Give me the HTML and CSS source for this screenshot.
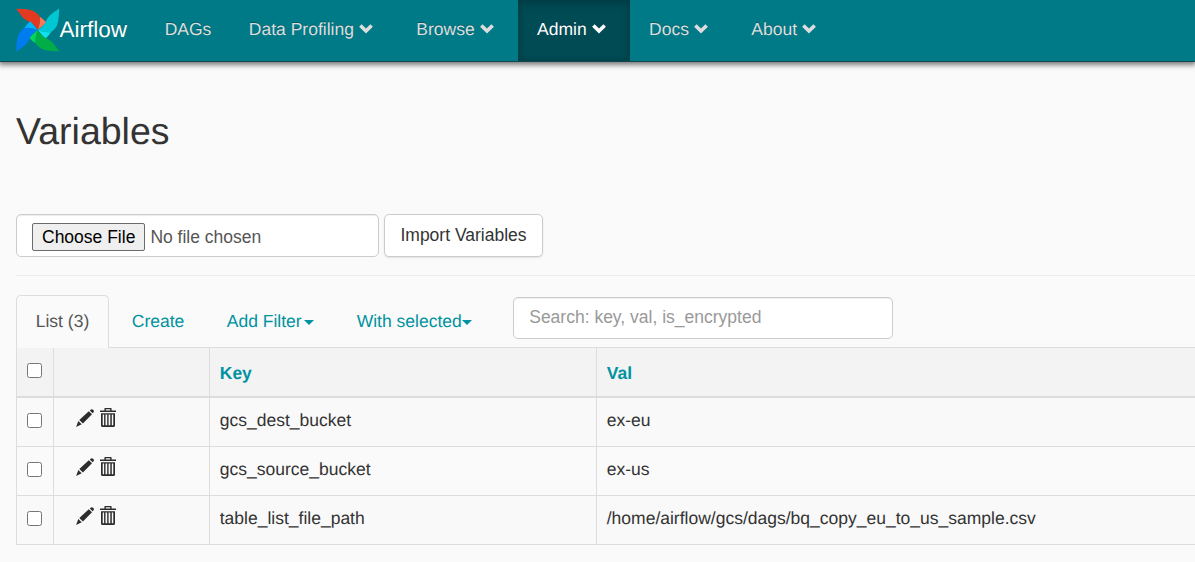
FILE: index.html
```html
<!DOCTYPE html>
<html lang="en">
<head>
<meta charset="utf-8">
<title>Airflow - Variables</title>
<link rel="stylesheet" href="styles.css">
</head>
<body>
<svg width="0" height="0" class="defs">
  <symbol id="chevron" viewBox="0 0 14 10"><path d="M2.6 .2 7 4.4 11.4 .2 13.9 2.7 7 9.6 .1 2.7Z"/></symbol>
  <symbol id="pencil" viewBox="0 0 18 18"><path d="M13.8 1.6 15 .5Q15.9-.2 16.7.5L17.7 1.5Q18.3 2.4 17.6 3.3L16.6 4.3ZM12.8 2.2 16 5.3 6.9 14.4 3.3 10.9ZM2.3 12 5.7 15.2 .1 17.9Z"/></symbol>
  <symbol id="trash" viewBox="0 0 16 19"><path fill-rule="evenodd" d="M5 0H11Q11.6 0 11.6 .8V2.6H16V4.1H0V2.6H4.4V.8Q4.4 0 5 0ZM5.8 1.3V2.6H10.2V1.3ZM1 5.3H15V17.4Q15 18.9 13.5 18.9H2.5Q1 18.9 1 17.4ZM2.7 6.4V17.3H4.1V6.4ZM5.5 6.4V17.3H7.2V6.4ZM8.6 6.4V17.3H10.3V6.4ZM11.8 6.4V17.3H13.3V6.4Z"/></symbol>
  <symbol id="blade" viewBox="0 0 44 44"><path d="M0 .4C8 .5 15 .9 19 3.5C22 5.5 23.8 7.5 24.2 9C24.7 14 23.7 18 22 22C19 16.5 15 14.5 12 13C6 10 5 6 0 .4Z"/></symbol>
  <symbol id="fold" viewBox="0 0 44 44"><path d="M24.1 8.5Q28 11 30.8 14.5L22 22Q25 15 24.1 8.5Z"/></symbol>
</svg>
<nav class="navbar">
  <a class="brand">
    <svg class="logo" viewBox="0 0 44 44">
      <g><use href="#blade" fill="#e43921"/><use href="#fold" fill="#ff7557"/></g>
      <g transform="rotate(90 22 22)"><use href="#blade" fill="#00c7d4"/><use href="#fold" fill="#11e1ee"/></g>
      <g transform="rotate(180 22 22)"><use href="#blade" fill="#00ad46"/><use href="#fold" fill="#04d659"/></g>
      <g transform="rotate(270 22 22)"><use href="#blade" fill="#017cee"/><use href="#fold" fill="#00b5ff"/></g>
    </svg><span>Airflow</span></a>
  <a class="item">DAGs</a>
  <a class="item menu">Data Profiling <svg class="chev"><use href="#chevron"/></svg></a>
  <a class="item menu">Browse <svg class="chev"><use href="#chevron"/></svg></a>
  <a class="item menu active">Admin <svg class="chev"><use href="#chevron"/></svg></a>
  <a class="item menu">Docs <svg class="chev"><use href="#chevron"/></svg></a>
  <a class="item menu">About <svg class="chev"><use href="#chevron"/></svg></a>
</nav>
<main class="content">
  <h2 class="title">Variables</h2>
  <form class="import">
    <input class="control file" type="file">
    <button class="btn" type="button">Import Variables</button>
  </form>
  <hr class="rule">
  <div class="tabs">
    <a class="tab current">List (3)</a>
    <a class="tab create">Create</a>
    <a class="tab filter">Add Filter<i class="caret spaced"></i></a>
    <a class="tab">With selected<i class="caret"></i></a>
    <input class="control search" type="text" placeholder="Search: key, val, is_encrypted">
  </div>
  <table class="list">
    <colgroup><col class="c-check"><col class="c-actions"><col class="c-key"><col></colgroup>
    <thead>
      <tr><th><input class="check" type="checkbox"></th><th></th><th>Key</th><th>Val</th></tr>
    </thead>
    <tbody>
      <tr><td><input class="check" type="checkbox"></td><td><div class="actions"><svg class="pencil"><use href="#pencil"/></svg><svg class="trash"><use href="#trash"/></svg></div></td><td>gcs_dest_bucket</td><td>ex-eu</td></tr>
      <tr><td><input class="check" type="checkbox"></td><td><div class="actions"><svg class="pencil"><use href="#pencil"/></svg><svg class="trash"><use href="#trash"/></svg></div></td><td>gcs_source_bucket</td><td>ex-us</td></tr>
      <tr><td><input class="check" type="checkbox"></td><td><div class="actions"><svg class="pencil"><use href="#pencil"/></svg><svg class="trash"><use href="#trash"/></svg></div></td><td>table_list_file_path</td><td>/home/airflow/gcs/dags/bq_copy_eu_to_us_sample.csv</td></tr>
    </tbody>
  </table>
</main>
</body>
</html>
```
FILE: styles.css
```css
* { box-sizing: border-box; }
body {
  margin: 0;
  height: 562px;
  overflow: hidden;
  background: #fafafa;
  color: #333;
  font: 17.5px/25px "Liberation Sans", Arial, sans-serif;
  text-rendering: geometricPrecision;
}
.defs { display: none; }
.navbar {
  display: flex;
  height: 62px;
  padding-left: 16px;
  background: #007a87;
  border-bottom: 1px solid #124650;
  box-shadow: 0 2px 5px 1px rgba(0, 0, 0, .5);
  text-shadow: 0 -1px 0 rgba(0, 0, 0, .25);
}
.brand {
  display: flex;
  align-items: center;
  width: 129.9px;
  color: #fff;
  font-size: 22.5px;
}
.brand span { padding-bottom: 3px; }
.logo { width: 43.5px; height: 44px; flex: none; margin-top: -1px; }
.item {
  display: flex;
  align-items: center;
  padding: 0 18.75px 2px;
  color: #ddd;
  white-space: pre;
}
.item.menu { padding-right: 24.4px; }
.item.active {
  background: #004b54;
  color: #fff;
  box-shadow: inset 0 4px 10px rgba(0, 0, 0, .15), inset 0 0 6px rgba(0, 0, 0, .15);
}
.chev { width: 14px; height: 10px; margin: -2px 0 0 .4px; fill: currentColor; }
.content { padding-left: 16px; }
.title { margin: 49px 0 0; height: 103px; font-size: 37.5px; line-height: 41px; font-weight: 400; }
.import { display: flex; gap: 5px; }
.control {
  height: 43px;
  border: 1px solid #ccc;
  border-radius: 5px;
  background: #fff;
  color: #555;
  font: inherit;
  box-shadow: inset 0 1px 1px rgba(0, 0, 0, .075);
}
.file { width: 363px; padding: 8px 15px; }
.file::file-selector-button {
  font: inherit;
  height: 28px;
  margin: 0 5px 0 0;
  padding: 0 9px;
  border: 1px solid #6b6b6b;
  border-radius: 2px;
  background: #efefef;
  color: #000;
}
.btn {
  width: 159px;
  height: 43px;
  padding: 0 0 1px;
  border: 1px solid #ccc;
  border-radius: 5px;
  background: #fff;
  color: #333;
  font: inherit;
  box-shadow: 0 1px 2px rgba(0, 0, 0, .1);
}
.rule { margin: 18px 0; border: 0; border-top: 1px solid #eee; height: 2px; }
.tabs { display: flex; height: 53px; border-bottom: 1px solid #ddd; }
.tab { display: flex; align-items: center; height: 53px; color: #0092a0; }
.current {
  width: 93px;
  padding: 0 0 2px 18.75px;
  border: 1px solid #ddd;
  border-bottom: 0;
  border-radius: 5px 5px 0 0;
  background: #fafafa;
  color: #555;
}
.create { margin: 0 42.5px 0 22.75px; }
.filter { margin-right: 42.5px; }
.caret { border: 5px solid transparent; border-top-color: currentColor; border-bottom: 0; margin-top: 2px; }
.caret.spaced { margin-left: 2.5px; }
.search { width: 380px; height: 42px; margin: 2px 0 0 41px; padding: 0 15.5px 2px; }
.search::placeholder { color: #999; }
.list { width: 100%; table-layout: fixed; border-spacing: 0; }
.c-check { width: 37px; }
.c-actions { width: 156px; }
.c-key { width: 387px; }
.list th, .list td {
  height: 49px;
  padding: 0 10px 3px 9.75px;
  border-left: 1px solid #ddd;
  border-bottom: 1px solid #ddd;
  text-align: left;
}
.list th { height: 50px; padding: 2px 10px 0 9.75px; background: #f3f3f3; border-bottom-width: 2px; color: #0092a0; }
.list tbody tr:nth-child(odd) { background: #f9f9f9; }
.check { display: block; width: 15px; height: 15px; margin: 0; }
.list th .check { margin-top: -5px; }
.actions { display: flex; gap: 6px; padding-left: 12.25px; margin-top: -7px; fill: #2d2d2d; }
.pencil { width: 18px; height: 18px; margin-top: 1px; }
.trash { width: 16px; height: 19px; }
```
